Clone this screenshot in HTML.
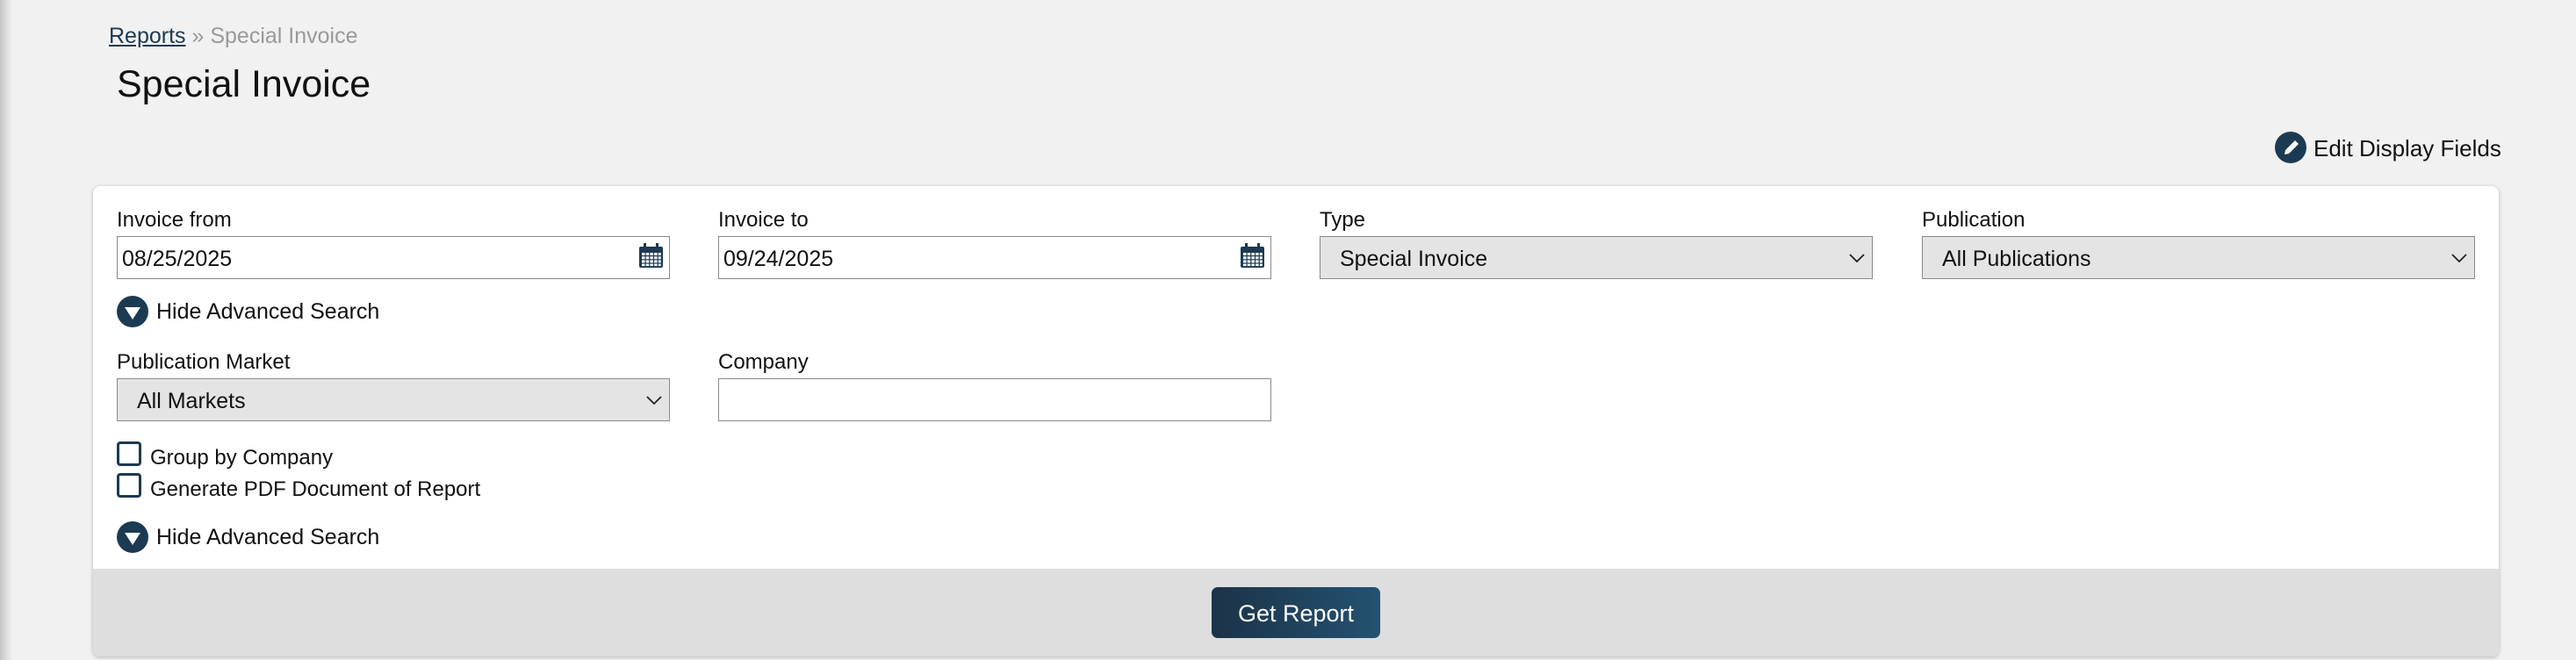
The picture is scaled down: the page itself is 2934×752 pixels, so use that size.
<!DOCTYPE html>
<html><head><meta charset="utf-8">
<style>
*{box-sizing:border-box;margin:0;padding:0}
html,body{width:2934px;height:752px;overflow:hidden;background:#f1f1f1;font-family:"Liberation Sans",Arial,sans-serif;color:#111}
.abs{position:absolute;white-space:nowrap}
.edge{position:absolute;left:0;top:0;width:14px;height:752px;background:linear-gradient(to right,#c4c4c4,#dcdcdc 50%,#f1f1f1)}
.card{position:absolute;left:106px;top:212px;width:2740px;height:536px;background:#fff;border-radius:8px;box-shadow:0 1px 5px rgba(0,0,0,.25);overflow:hidden}
.foot{position:absolute;left:0;top:436px;width:100%;height:100px;background:#dedede}
.lbl{font-size:24px;line-height:24px}
.inp{position:absolute;height:49px;width:630px;border:1.5px solid #8a8a8a;background:#fff;font-size:25px;display:flex;align-items:center;padding-left:5px;padding-top:4px}
.sel{background:#e4e4e4;padding-left:22px}
.chev{position:absolute;right:8px;top:19px}
.circ{position:absolute;width:36px;height:36px;border-radius:50%;background:#1c3a52}
.cb{position:absolute;width:28px;height:28px;border:3px solid #1c3a52;border-radius:4px;background:#fff}
.btn{position:absolute;left:1380px;top:669px;width:192px;height:58px;border-radius:7px;background:linear-gradient(to right,#1b3348,#245271);color:#fff;font-size:27px;display:flex;align-items:center;justify-content:center;padding-top:2px}
</style></head><body>
<div class="edge"></div>
<div class="abs" style="left:124px;top:29px;font-size:25px;line-height:25px"><span style="color:#1c3a52;text-decoration:underline">Reports</span><span style="color:#999"> » Special Invoice</span></div>
<div class="abs" style="left:133px;top:75px;font-size:43px;line-height:43px">Special Invoice</div>
<div class="circ" style="left:2591px;top:150px"><svg width="36" height="36" viewBox="0 0 36 36"><path d="M11 26 L12 21 L23 10 L27 14 L16 25 Z" fill="#fff"/></svg></div>
<div class="abs" style="left:2635px;top:156px;font-size:26px;line-height:26px">Edit Display Fields</div>

<div class="card"><div class="foot"></div></div>

<div class="abs lbl" style="left:133px;top:239px">Invoice from</div>
<div class="abs lbl" style="left:818px;top:239px">Invoice to</div>
<div class="abs lbl" style="left:1503px;top:239px">Type</div>
<div class="abs lbl" style="left:2189px;top:239px">Publication</div>

<div class="inp" style="left:133px;top:269px">08/25/2025
<svg style="position:absolute;right:6px;top:7px" width="29" height="29" viewBox="0 0 29 29"><rect x="1" y="4" width="27" height="24" rx="2" fill="#1c3a52"/><rect x="6" y="0" width="3" height="7" fill="#1c3a52"/><rect x="20" y="0" width="3" height="7" fill="#1c3a52"/><g fill="#fff"><rect x="4" y="11" width="3.5" height="3"/><rect x="8.7" y="11" width="3.5" height="3"/><rect x="13.4" y="11" width="3.5" height="3"/><rect x="18.1" y="11" width="3.5" height="3"/><rect x="22.8" y="11" width="3" height="3"/><rect x="4" y="15.2" width="3.5" height="3"/><rect x="8.7" y="15.2" width="3.5" height="3"/><rect x="13.4" y="15.2" width="3.5" height="3"/><rect x="18.1" y="15.2" width="3.5" height="3"/><rect x="22.8" y="15.2" width="3" height="3"/><rect x="4" y="19.4" width="3.5" height="3"/><rect x="8.7" y="19.4" width="3.5" height="3"/><rect x="13.4" y="19.4" width="3.5" height="3"/><rect x="18.1" y="19.4" width="3.5" height="3"/><rect x="22.8" y="19.4" width="3" height="3"/><rect x="4" y="23.6" width="3.5" height="2.5"/><rect x="8.7" y="23.6" width="3.5" height="2.5"/><rect x="13.4" y="23.6" width="3.5" height="2.5"/><rect x="18.1" y="23.6" width="3.5" height="2.5"/><rect x="22.8" y="23.6" width="3" height="2.5"/></g></svg></div>
<div class="inp" style="left:818px;top:269px">09/24/2025
<svg style="position:absolute;right:6px;top:7px" width="29" height="29" viewBox="0 0 29 29"><rect x="1" y="4" width="27" height="24" rx="2" fill="#1c3a52"/><rect x="6" y="0" width="3" height="7" fill="#1c3a52"/><rect x="20" y="0" width="3" height="7" fill="#1c3a52"/><g fill="#fff"><rect x="4" y="11" width="3.5" height="3"/><rect x="8.7" y="11" width="3.5" height="3"/><rect x="13.4" y="11" width="3.5" height="3"/><rect x="18.1" y="11" width="3.5" height="3"/><rect x="22.8" y="11" width="3" height="3"/><rect x="4" y="15.2" width="3.5" height="3"/><rect x="8.7" y="15.2" width="3.5" height="3"/><rect x="13.4" y="15.2" width="3.5" height="3"/><rect x="18.1" y="15.2" width="3.5" height="3"/><rect x="22.8" y="15.2" width="3" height="3"/><rect x="4" y="19.4" width="3.5" height="3"/><rect x="8.7" y="19.4" width="3.5" height="3"/><rect x="13.4" y="19.4" width="3.5" height="3"/><rect x="18.1" y="19.4" width="3.5" height="3"/><rect x="22.8" y="19.4" width="3" height="3"/><rect x="4" y="23.6" width="3.5" height="2.5"/><rect x="8.7" y="23.6" width="3.5" height="2.5"/><rect x="13.4" y="23.6" width="3.5" height="2.5"/><rect x="18.1" y="23.6" width="3.5" height="2.5"/><rect x="22.8" y="23.6" width="3" height="2.5"/></g></svg></div>
<div class="inp sel" style="left:1503px;top:269px">Special Invoice<svg class="chev" width="18" height="10" viewBox="0 0 18 10"><path d="M1 1 L9 9 L17 1" fill="none" stroke="#222" stroke-width="1.8"/></svg></div>
<div class="inp sel" style="left:2189px;top:269px">All Publications<svg class="chev" width="18" height="10" viewBox="0 0 18 10"><path d="M1 1 L9 9 L17 1" fill="none" stroke="#222" stroke-width="1.8"/></svg></div>

<div class="circ" style="left:133px;top:337px"><svg width="36" height="36" viewBox="0 0 36 36"><path d="M9 13 H27 L18 27 Z" fill="#fff"/></svg></div>
<div class="abs" style="left:178px;top:343px;font-size:25px;line-height:25px">Hide Advanced Search</div>

<div class="abs lbl" style="left:133px;top:401px">Publication Market</div>
<div class="abs lbl" style="left:818px;top:401px">Company</div>
<div class="inp sel" style="left:133px;top:431px">All Markets<svg class="chev" width="18" height="10" viewBox="0 0 18 10"><path d="M1 1 L9 9 L17 1" fill="none" stroke="#222" stroke-width="1.8"/></svg></div>
<div class="inp" style="left:818px;top:431px"></div>

<div class="cb" style="left:133px;top:503px"></div>
<div class="abs" style="left:171px;top:510px;font-size:24px;line-height:24px">Group by Company</div>
<div class="cb" style="left:133px;top:539px"></div>
<div class="abs" style="left:171px;top:546px;font-size:24px;line-height:24px">Generate PDF Document of Report</div>

<div class="circ" style="left:133px;top:594px"><svg width="36" height="36" viewBox="0 0 36 36"><path d="M9 13 H27 L18 27 Z" fill="#fff"/></svg></div>
<div class="abs" style="left:178px;top:600px;font-size:25px;line-height:25px">Hide Advanced Search</div>

<div class="btn">Get Report</div>
</body></html>
